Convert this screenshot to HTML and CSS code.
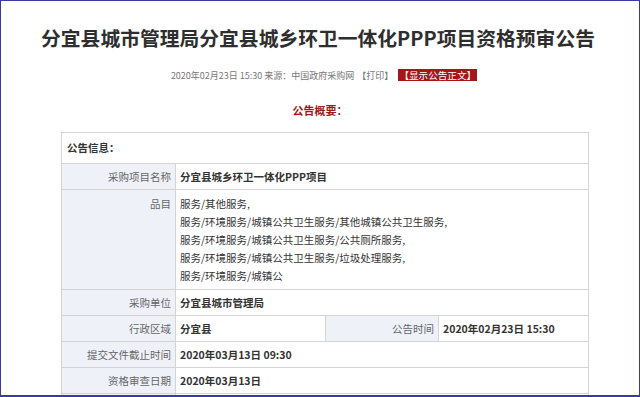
FILE: index.html
```html
<!DOCTYPE html>
<html lang="zh-CN">
  <head>
    <meta charset="UTF-8" />
    <meta name="viewport" content="width=device-width, initial-scale=1.0" />
    <title>分宜县城市管理局分宜县城乡环卫一体化PPP项目资格预审公告</title>
    <link rel="stylesheet" href="styles.css">
  </head>

  <body>
    <div class="frame">
      <!-- title -->
      <h1 class="title">分宜县城市管理局分宜县城乡环卫一体化PPP项目资格预审公告</h1>

      <div class="meta">
        <span>2020年02月23日 15:30 来源：中国政府采购网</span>
        <a href="#" class="print">【打印】</a>
        <a href="#" class="show-text">【显示公告正文】</a>
      </div>

      <div class="summary">公告概要：</div>

      <!-- info table -->
      <table class="info">
        <colgroup>
          <col class="c-label" />
          <col class="c-value" />
          <col class="c-label2" />
          <col class="c-value2" />
        </colgroup>
        <tr class="head-row">
          <td colspan="4">公告信息：</td>
        </tr>
        <tr>
          <td class="label">采购项目名称</td>
          <td class="value" colspan="3">分宜县城乡环卫一体化PPP项目</td>
        </tr>
        <tr>
          <td class="label top">品目</td>
          <td class="value list" colspan="3">
            服务/其他服务,<br />
            服务/环境服务/城镇公共卫生服务/其他城镇公共卫生服务,<br />
            服务/环境服务/城镇公共卫生服务/公共厕所服务,<br />
            服务/环境服务/城镇公共卫生服务/垃圾处理服务,<br />
            服务/环境服务/城镇公
          </td>
        </tr>
        <tr>
          <td class="label">采购单位</td>
          <td class="value" colspan="3">分宜县城市管理局</td>
        </tr>
        <tr>
          <td class="label">行政区域</td>
          <td class="value">分宜县</td>
          <td class="label">公告时间</td>
          <td class="value">2020年02月23日 15:30</td>
        </tr>
        <tr>
          <td class="label">提交文件截止时间</td>
          <td class="value" colspan="3">2020年03月13日 09:30</td>
        </tr>
        <tr>
          <td class="label">资格审查日期</td>
          <td class="value" colspan="3">2020年03月13日</td>
        </tr>
        <tr class="more-row">
          <td class="label"></td>
          <td class="value" colspan="3"></td>
        </tr>
      </table>
    </div>
  </body>
</html>
```

FILE: styles.css
```css
body {
  margin: 0;
  padding: 0;
  font-family: "Noto Sans CJK SC", "Noto Sans", sans-serif;
  background-color: #fff;
}

.frame {
  box-sizing: border-box;
  width: 640px;
  height: 397px;
  border: 1px solid #3b39a6;
  border-bottom-width: 2px;
  overflow: hidden;
}

.title {
  margin: 23px 0 0 0;
  padding-right: 4px;
  font-size: 19.8px;
  line-height: 28px;
  font-weight: bold;
  color: #2e2e2e;
  text-align: center;
}

.meta {
  display: flex;
  justify-content: center;
  align-items: center;
  margin-top: 15px;
  padding-left: 8px;
  height: 16px;
  font-size: 9px;
  color: #777;
}

a {
  text-decoration: none;
}

.print {
  color: #777;
  margin-left: 3px;
}

.show-text {
  margin-left: 5px;
  padding: 0 1px;
  line-height: 12px;
  font-size: 9.6px;
  background-color: #a3171a;
  color: #fff;
}

.summary {
  margin-top: 19px;
  height: 16px;
  line-height: 16px;
  text-align: center;
  font-size: 11px;
  font-weight: bold;
  color: #9c1a1a;
}

.info {
  margin: 14px 0 0 60px;
  width: 528px;
  border-collapse: collapse;
  table-layout: fixed;
  font-size: 10.5px;
  color: #333;
}

.c-label {
  width: 114px;
}
.c-value {
  width: 150px;
}
.c-label2 {
  width: 113px;
}

.info td {
  border: 1px solid #d4d4d4;
  padding: 4px 4px 3px 4px;
  line-height: 18px;
  vertical-align: middle;
}

.head-row td {
  padding: 6px 5px;
  font-weight: bold;
  color: #333;
}

.info .label {
  background-color: #eff1f9;
  color: #666;
  text-align: right;
}

.info .label.top {
  vertical-align: top;
  padding-top: 5px;
}

.info .value {
  font-weight: bold;
  color: #333;
}

.info .value.list {
  font-weight: normal;
  color: #333;
  padding-top: 5px;
  padding-bottom: 4px;
}

.more-row td {
  height: 18px;
}
```
